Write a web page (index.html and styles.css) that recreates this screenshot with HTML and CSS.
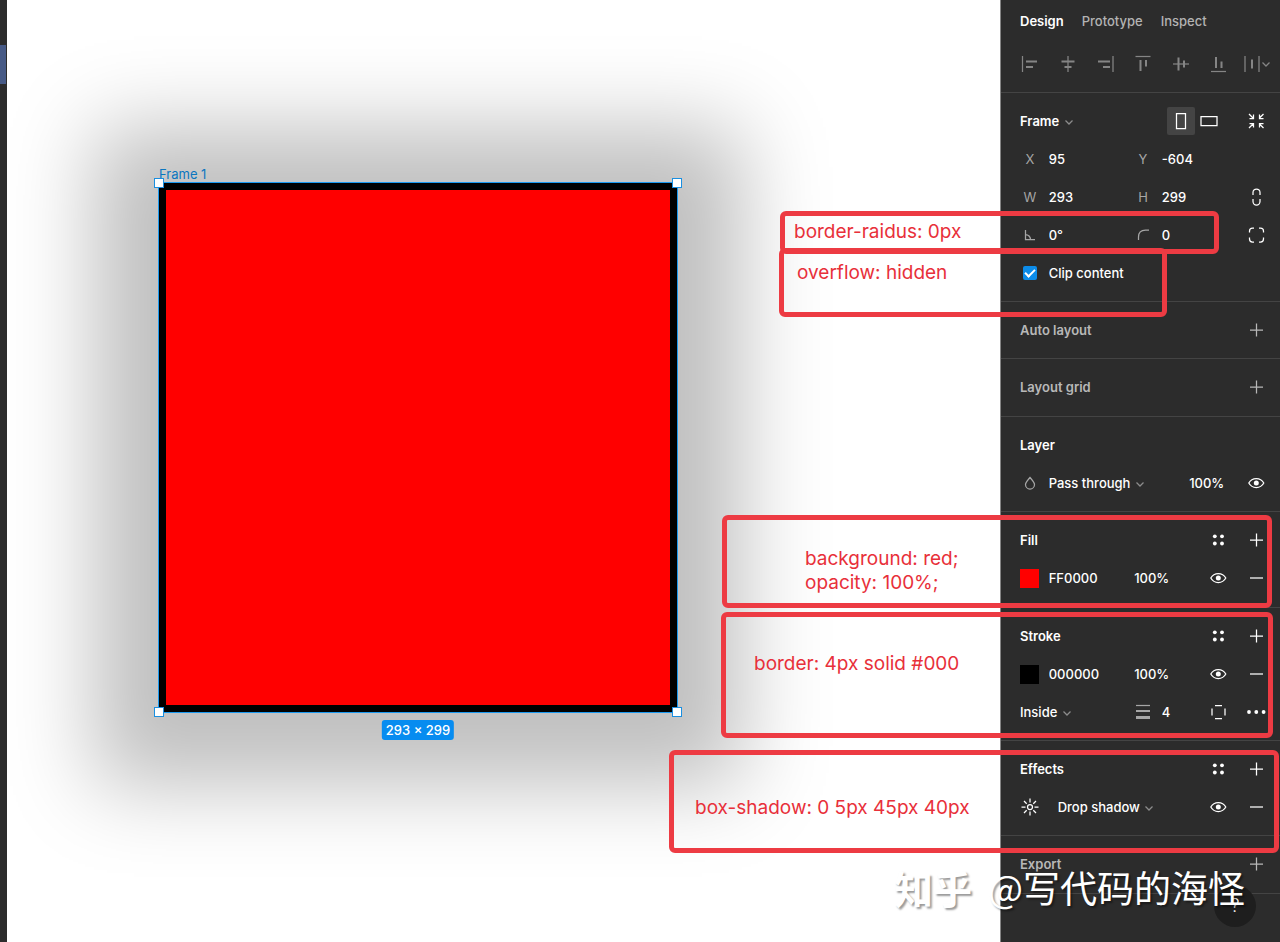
FILE: index.html
```
<!DOCTYPE html>
<html lang="en">
<head>
<meta charset="utf-8">
<title>Frame 1</title>
<link rel="stylesheet" href="styles.css">
</head>
<body>
<svg class="sprite" aria-hidden="true">
  <symbol id="chevron" viewBox="0 0 10 10"><path d="M1.5 3.5 5 7l3.500-3.500"/></symbol>
  <symbol id="plus" viewBox="0 0 24 24"><path d="M12.500 5.500v13M6 12h13"/></symbol>
  <symbol id="minus" viewBox="0 0 24 24"><path d="M6 12h13"/></symbol>
  <symbol id="eye" viewBox="0 0 24 24"><path d="M4.800 12C6.500 8.900 9 7.500 12.300 7.500s5.800 1.400 7.500 4.500c-1.700 3.100-4.200 4.500-7.500 4.500S6.500 15.100 4.800 12z"/><circle class="solid" cx="12.300" cy="12" r="2.500"/></symbol>
  <symbol id="dots" viewBox="0 0 24 24"><g class="solid"><circle cx="8.800" cy="8.300" r="1.900"/><circle cx="16" cy="8.300" r="1.900"/><circle cx="8.800" cy="15.500" r="1.900"/><circle cx="16" cy="15.500" r="1.900"/></g></symbol>
</svg>
<div class="editor">
  <div class="layers"><div class="layer-selected"></div></div>
  <main class="canvas">
    <div class="frame">
      <span class="frame-name">Frame 1</span>
      <i class="handle nw"></i><i class="handle ne"></i><i class="handle sw"></i><i class="handle se"></i>
      <span class="frame-size">293 × 299</span>
    </div>
  </main>
  <aside class="panel">
    <header class="panel-head">
      <nav class="tabs">
        <button class="tab current">Design</button>
        <button class="tab">Prototype</button>
        <button class="tab">Inspect</button>
      </nav>
      <div class="row align-row">
        <button class="tool" aria-label="Align left"><svg class="icon" viewBox="0 0 24 24"><path d="M4.500 4v16"/><path class="thick" d="M8 9.500h11M8 15h7"/></svg></button>
        <button class="tool" aria-label="Align horizontal centers"><svg class="icon" viewBox="0 0 24 24"><path d="M12 4v16"/><path class="thick" d="M5.500 9.500h13M8.500 15h7"/></svg></button>
        <button class="tool" aria-label="Align right"><svg class="icon" viewBox="0 0 24 24"><path d="M20 4v16"/><path class="thick" d="M5 9.500h12M10 15h7"/></svg></button>
        <button class="tool" aria-label="Align top"><svg class="icon" viewBox="0 0 24 24"><path d="M4.500 4.500h15"/><path class="thick" d="M9.500 8v11M15 8v6.500"/></svg></button>
        <button class="tool" aria-label="Align vertical centers"><svg class="icon" viewBox="0 0 24 24"><path d="M4 12h16"/><path class="thick" d="M9.500 5.500v13M15 8.500v7"/></svg></button>
        <button class="tool" aria-label="Align bottom"><svg class="icon" viewBox="0 0 24 24"><path d="M5 19.500h15"/><path class="thick" d="M10 5v11M15.500 9.500V16"/></svg></button>
        <button class="tool" aria-label="Distribute"><svg class="icon wide" viewBox="0 0 38 24"><path d="M8 4v16M22 4v16M25.500 10.500l3.500 3.500 3.500-3.500"/><path class="thick" d="M15 7.500v9"/></svg></button>
      </div>
    </header>

    <section class="section">
      <div class="row">
        <button class="title active">Frame <svg class="chevron"><use href="#chevron"/></svg></button>
        <div class="orientation">
          <button class="orient on" aria-label="Portrait"><svg class="icon" viewBox="0 0 24 24"><path d="M7.500 4.500h9v15h-9z"/></svg></button>
          <button class="orient" aria-label="Landscape"><svg class="icon" viewBox="0 0 24 24"><path d="M4 7.500h16v9H4z"/></svg></button>
        </div>
        <button class="tool bright last" aria-label="Resize to fit"><svg class="icon" viewBox="0 0 24 24"><path d="M5 5l4 4M5.500 9.500h4v-4M19.500 5l-4 4M19.500 9.500h-4v-4M5 19l4-4M5.500 14.500h4v4M19.500 19l-4-4M19.500 14.500h-4v4"/></svg></button>
      </div>
      <div class="row">
        <label class="mark" for="x">X</label><input class="field" id="x" value="95">
        <label class="mark" for="y">Y</label><input class="field" id="y" value="-604">
      </div>
      <div class="row">
        <label class="mark" for="w">W</label><input class="field" id="w" value="293">
        <label class="mark" for="h">H</label><input class="field" id="h" value="299">
        <button class="tool bright last" aria-label="Constrain proportions"><svg class="icon" viewBox="0 0 24 24"><path d="M9 10V7.500a3.500 3.500 0 0 1 7 0V10M9 14v2.500a3.500 3.500 0 0 0 7 0V14"/></svg></button>
      </div>
      <div class="row">
        <label class="mark" for="angle" aria-label="Rotation"><svg class="icon" viewBox="0 0 24 24"><path d="M7.500 7v9.500H17M7.500 11.500a5 5 0 0 1 5 5"/></svg></label><input class="field" id="angle" value="0°">
        <label class="mark" for="radius" aria-label="Corner radius"><svg class="icon" viewBox="0 0 24 24"><path d="M7.500 17v-3c0-4.500 2.500-7 7-7H18"/></svg></label><input class="field" id="radius" value="0">
        <button class="tool bright last" aria-label="Independent corners"><svg class="icon" viewBox="0 0 24 24"><path d="M5.500 9.500V8a3 3 0 0 1 3-3H10M15 5h1.500a3 3 0 0 1 3 3v1.500M19.500 14.500V16a3 3 0 0 1-3 3H15M10 19H8.500a3 3 0 0 1-3-3v-1.500"/></svg></button>
      </div>
      <div class="row">
        <input class="check" type="checkbox" id="clip" checked><label class="text" for="clip">Clip content</label>
      </div>
    </section>

    <section class="section">
      <div class="row"><h2 class="title">Auto layout</h2><button class="tool soft last" aria-label="Add auto layout"><svg class="icon"><use href="#plus"/></svg></button></div>
    </section>
    <section class="section roomy">
      <div class="row"><h2 class="title">Layout grid</h2><button class="tool soft last" aria-label="Add layout grid"><svg class="icon"><use href="#plus"/></svg></button></div>
    </section>

    <section class="section">
      <div class="row"><h2 class="title active">Layer</h2></div>
      <div class="row">
        <span class="mark"><svg class="icon" viewBox="0 0 24 24"><path d="M12 6.500c2.500 3 4.500 5 4.500 7a4.500 4.500 0 0 1-9 0c0-2 2-4 4.500-7z"/></svg></span>
        <button class="text">Pass through <svg class="chevron"><use href="#chevron"/></svg></button>
        <input class="field opacity" aria-label="Layer opacity" value="100%">
        <button class="tool bright last" aria-label="Toggle layer"><svg class="icon"><use href="#eye"/></svg></button>
      </div>
    </section>

    <section class="section roomy">
      <div class="row">
        <h2 class="title active">Fill</h2>
        <button class="tool bright sixth" aria-label="Fill styles"><svg class="icon"><use href="#dots"/></svg></button>
        <button class="tool bright last" aria-label="Add fill"><svg class="icon"><use href="#plus"/></svg></button>
      </div>
      <div class="row">
        <button class="swatch red" aria-label="Fill color"></button>
        <input class="field hex" aria-label="Fill hex" value="FF0000">
        <input class="field alpha" aria-label="Fill opacity" value="100%">
        <button class="tool bright sixth" aria-label="Toggle fill"><svg class="icon"><use href="#eye"/></svg></button>
        <button class="tool bright last" aria-label="Remove fill"><svg class="icon"><use href="#minus"/></svg></button>
      </div>
    </section>

    <section class="section">
      <div class="row">
        <h2 class="title active">Stroke</h2>
        <button class="tool bright sixth" aria-label="Stroke styles"><svg class="icon"><use href="#dots"/></svg></button>
        <button class="tool bright last" aria-label="Add stroke"><svg class="icon"><use href="#plus"/></svg></button>
      </div>
      <div class="row">
        <button class="swatch black" aria-label="Stroke color"></button>
        <input class="field hex" aria-label="Stroke hex" value="000000">
        <input class="field alpha" aria-label="Stroke opacity" value="100%">
        <button class="tool bright sixth" aria-label="Toggle stroke"><svg class="icon"><use href="#eye"/></svg></button>
        <button class="tool bright last" aria-label="Remove stroke"><svg class="icon"><use href="#minus"/></svg></button>
      </div>
      <div class="row">
        <button class="text outer">Inside <svg class="chevron"><use href="#chevron"/></svg></button>
        <label class="mark fourth" for="weight" aria-label="Stroke weight"><svg class="icon" viewBox="0 0 24 24"><path d="M5 5.500h14"/><path class="thick" d="M5 11h14"/><path class="heavy" d="M5 17.500h14"/></svg></label>
        <input class="field fifth" id="weight" value="4">
        <button class="tool bright sixth" aria-label="Stroke per side"><svg class="icon" viewBox="0 0 24 24"><path d="M9 5.500h7M9 18.500h7M6 8.500v7M19 8.500v7"/></svg></button>
        <button class="tool bright last" aria-label="Advanced stroke"><svg class="icon" viewBox="0 0 24 24"><g class="solid"><circle cx="5" cy="12" r="1.900"/><circle cx="12.300" cy="12" r="1.900"/><circle cx="19.600" cy="12" r="1.900"/></g></svg></button>
      </div>
    </section>

    <section class="section">
      <div class="row">
        <h2 class="title active">Effects</h2>
        <button class="tool bright sixth" aria-label="Effect styles"><svg class="icon"><use href="#dots"/></svg></button>
        <button class="tool bright last" aria-label="Add effect"><svg class="icon"><use href="#plus"/></svg></button>
      </div>
      <div class="row">
        <button class="tool bright" aria-label="Effect settings"><svg class="icon" viewBox="0 0 24 24"><circle cx="12" cy="12" r="2.500"/><path d="M12 3.500v4M12 16.500v4M3.500 12h4M16.500 12h4M6 6l2.700 2.700M15.300 15.300 18 18M18 6l-2.700 2.700M8.700 15.300 6 18"/></svg></button>
        <button class="text indent">Drop shadow <svg class="chevron"><use href="#chevron"/></svg></button>
        <button class="tool bright sixth" aria-label="Toggle effect"><svg class="icon"><use href="#eye"/></svg></button>
        <button class="tool bright last" aria-label="Remove effect"><svg class="icon"><use href="#minus"/></svg></button>
      </div>
    </section>

    <section class="section roomy">
      <div class="row"><h2 class="title">Export</h2><button class="tool soft last" aria-label="Add export"><svg class="icon"><use href="#plus"/></svg></button></div>
    </section>
    <button class="help">?</button>
  </aside>

  <div class="note note-radius">border-raidus: 0px</div>
  <div class="note note-overflow">overflow: hidden</div>
  <div class="note note-fill">background: red;<br>opacity: 100%;</div>
  <div class="note note-border">border: 4px solid #000</div>
  <div class="note note-shadow">box-shadow: 0 5px 45px 40px</div>
  <div class="credit"><b class="credit-site">知乎</b><span>@写代码的海怪</span></div>
</div>
</body>
</html>
```
FILE: styles.css
```
* { box-sizing: border-box; }

body {
  margin: 0;
  font: 500 13px/20px Inter, "Noto Sans CJK SC", sans-serif;
  color: #fff;
}

button, input {
  margin: 0;
  padding: 0;
  border: 0;
  background: none;
  color: inherit;
  font: inherit;
  text-align: left;
}

.sprite { display: none; }

.editor {
  position: relative;
  display: flex;
  min-height: 100vh;
  overflow: hidden;
}

.layers {
  flex: none;
  width: 7px;
  padding-top: 45px;
  background: #2c2c2c;
}
.layer-selected {
  width: 6px;
  height: 39px;
  background: #475a86;
}

/* Canvas */
.canvas {
  position: relative;
  flex: 1;
  overflow: hidden;
  background: #fff;
}
.frame {
  position: absolute;
  left: 151px;
  top: 182px;
  width: 520px;
  height: 531px;
  border: 1px solid #1b9af0;
  background: #f00;
  box-shadow: inset 0 0 0 7px #000, 0 9px 80px 64px rgba(0, 0, 0, .25);
}
.frame-name {
  position: absolute;
  left: 0;
  bottom: 100%;
  line-height: 18px;
  color: #0a76c0;
  font-weight: 400;
}
.handle {
  position: absolute;
  width: 10px;
  height: 10px;
  border: 1px solid #1b8fe0;
  background: #fff;
}
.nw { left: -5px; top: -5px; }
.ne { right: -5px; top: -5px; }
.sw { left: -5px; bottom: -5px; }
.se { right: -5px; bottom: -5px; }
.frame-size {
  position: absolute;
  left: 50%;
  top: 100%;
  margin-top: 8px;
  padding: 0 4px;
  border-radius: 3px;
  background: #078cf0;
  white-space: nowrap;
  transform: translateX(-50%);
}

/* Properties panel */
.panel {
  position: relative;
  flex: none;
  width: 280px;
  border-left: 1px solid #858585;
  background: #2c2c2c;
}
.panel-head {
  padding-bottom: 6px;
  border-bottom: 1px solid #444;
}
.tabs {
  display: flex;
  align-items: center;
  gap: 18px;
  height: 42px;
  padding-left: 19px;
}
.tab { color: #b3b3b3; }
.tab.current { color: #fff; font-weight: 600; }

.section {
  padding: 9px 0;
  border-bottom: 1px solid #444;
}
.roomy { padding-bottom: 10px; }

.row {
  display: grid;
  grid-template-columns: repeat(7, 1fr);
  align-items: center;
  height: 38px;
  padding: 0 5px 0 10px;
}
.align-row { height: 44px; }
.row > * { grid-row: 1; min-width: 0; }

.title {
  grid-column: 1 / span 4;
  margin: 0 0 0 9px;
  font-size: 13px;
  font-weight: 600;
  color: #b8b8b8;
}
.title.active { color: #fff; }
.text { grid-column: 2 / span 4; white-space: nowrap; }
.text.outer { grid-column: 1 / span 3; margin-left: 9px; }
.text.indent { margin-left: 9px; }

.mark {
  justify-self: center;
  display: flex;
  color: #a6a6a6;
  font-weight: 400;
}
.field { grid-column: span 2; width: 100%; }
.field.opacity { grid-column: 5 / span 2; padding-right: 13px; text-align: right; }
.field.hex { grid-column: 2 / span 2; }
.field.alpha { grid-column: 4 / span 2; padding-left: 10px; }
.field.fifth { grid-column: 5; }
.fourth { grid-column: 4; }
.sixth { grid-column: 6; }
.last { grid-column: 7; }

.tool {
  display: flex;
  justify-content: center;
  justify-self: stretch;
  color: #858585;
}
.tool.bright { color: #fff; }
.tool.soft { color: #b8b8b8; }

.icon, .chevron {
  flex: none;
  width: 24px;
  height: 24px;
  fill: none;
  stroke: currentColor;
  stroke-width: 1.25px;
}
.icon.wide { width: 38px; }
.chevron {
  width: 10px;
  height: 10px;
  margin-left: 1px;
  vertical-align: -1px;
  color: #8c8c8c;
}
.solid { fill: currentColor; stroke: none; }
.thick { stroke-width: 2px; }
.heavy { stroke-width: 3px; }

.orientation {
  grid-column: 5 / span 2;
  display: flex;
  padding-left: 5px;
}
.orient {
  display: flex;
  align-items: center;
  justify-content: center;
  width: 28px;
  height: 28px;
  border-radius: 2px;
}
.orient.on { background: #444; }

.check {
  appearance: none;
  justify-self: center;
  display: grid;
  place-items: center;
  width: 14px;
  height: 14px;
  border-radius: 2px;
  background: #0c8ce9;
}
.check:checked::after {
  content: "";
  width: 8px;
  height: 4px;
  margin-bottom: 2px;
  border: solid #fff;
  border-width: 0 0 2px 2px;
  transform: rotate(-45deg);
}

.swatch {
  justify-self: center;
  width: 19px;
  height: 19px;
}
.red { background: #f00; }
.black { background: #000; }

.help {
  position: absolute;
  right: 24px;
  top: 885px;
  width: 42px;
  height: 42px;
  border-radius: 50%;
  background: #1e1e1e;
  font-size: 18px;
  font-weight: 300;
  text-align: center;
}

/* Notes drawn across the canvas and the panel */
.note {
  position: absolute;
  border: 5px solid #ed3b43;
  border-radius: 6px;
  color: #e8303a;
  font-size: 19px;
  font-weight: 400;
  line-height: 24px;
}
.note-radius { right: 61px; top: 211px; width: 439px; height: 43px; padding: 4px 9px; }
.note-overflow { right: 113px; top: 248px; width: 388px; height: 69px; padding: 8px 13px; }
.note-fill { right: 8px; top: 515px; width: 550px; height: 93px; padding: 27px 78px; }
.note-border { right: 7px; top: 612px; width: 552px; height: 126px; padding: 35px 28px; }
.note-shadow { right: 1px; top: 750px; width: 610px; height: 103px; padding: 41px 21px; }

.credit {
  position: absolute;
  right: 35px;
  top: 862px;
  display: flex;
  gap: 16px;
  font: 400 37px/50px "Noto Sans CJK SC", sans-serif;
  text-shadow: 2px 2px 2px rgba(0, 0, 0, .4);
  white-space: nowrap;
  pointer-events: none;
}
.credit-site { font-size: 39px; font-weight: 700; }
```
